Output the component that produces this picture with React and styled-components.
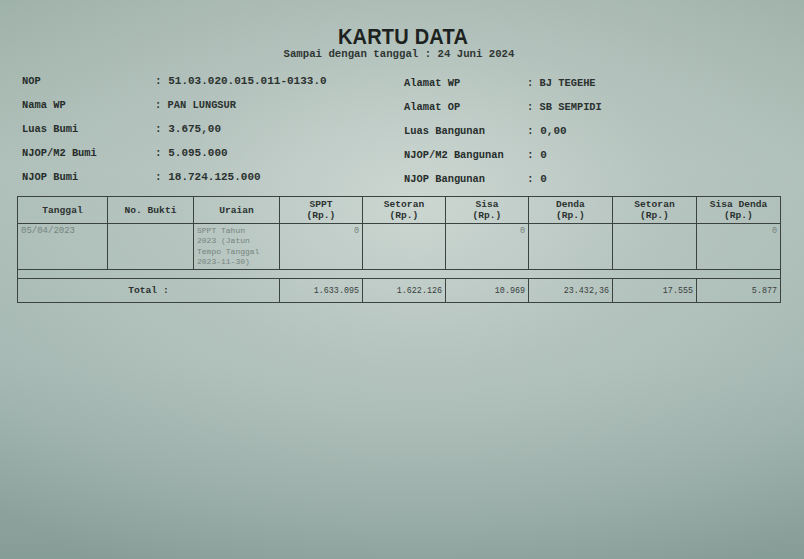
import React from "react";
import styled, { createGlobalStyle } from "styled-components";

const Global = createGlobalStyle`
  html, body { margin: 0; padding: 0; }
  body {
    width: 804px;
    height: 559px;
    overflow: hidden;
    background: #98aca5;
  }
`;

const Page = styled.div`
  width: 804px;
  height: 559px;
  box-sizing: border-box;
  padding: 24px 23px 0 17px;
  background:
    radial-gradient(ellipse 620px 420px at 52% 36%, rgba(206, 216, 211, 0.95) 0%, rgba(188, 201, 196, 0.7) 40%, rgba(160, 178, 172, 0) 100%),
    linear-gradient(180deg, #97aba1 0%, #a8bab4 30%, #9fb3ae 65%, #869c97 100%);
  font-family: "Liberation Mono", "DejaVu Sans Mono", monospace;
  color: #262d2b;
`;

const Title = styled.h1`
  margin: 0;
  text-align: center;
  font-family: "Liberation Sans", Arial, sans-serif;
  font-weight: 700;
  font-size: 20px;
  line-height: 24px;
  letter-spacing: 0.2px;
  color: #1c2220;
  transform: translateX(4px) scaleY(1.08);
`;

const Subtitle = styled.div`
  text-align: center;
  font-size: 10.7px;
  line-height: 14px;
  font-weight: 700;
  color: #2f3634;
  margin-top: -1px;
`;

const InfoGrid = styled.div`
  display: grid;
  grid-template-columns: 382px 1fr;
  margin: 8px 0 0 5px;
`;

const InfoCol = styled.div`
  display: flex;
  flex-direction: column;
  padding-top: ${(p) => p.$offset || 0}px;
`;

const InfoRow = styled.div`
  display: grid;
  grid-template-columns: ${(p) => p.$label}px 1fr;
  height: 24px;
  align-items: center;
`;

const Label = styled.span`
  font-size: 10.4px;
  font-weight: 700;
  color: #262d2b;
  white-space: nowrap;
`;

const Value = styled.span`
  font-size: ${(p) => (p.$big ? 11 : 10.4)}px;
  font-weight: 700;
  color: #2b3230;
  white-space: nowrap;
`;

const Table = styled.table`
  margin-top: 5px;
  width: 764px;
  border-collapse: collapse;
  table-layout: fixed;
  border: 1.5px solid #3a4340;
`;

const Col = styled.col`
  width: ${(p) => p.$w}px;
`;

const Th = styled.th`
  height: 26px;
  padding: 0 2px;
  border: 1px solid #3a4340;
  font-size: 9.6px;
  line-height: 11px;
  font-weight: 700;
  color: #2c3331;
  text-align: center;
  vertical-align: middle;
`;

const Td = styled.td`
  height: 37px;
  padding: 2px 3px;
  border: 1px solid #3a4340;
  font-size: ${(p) => p.$size || 8.5}px;
  line-height: 10.3px;
  color: #76847f;
  text-align: ${(p) => p.$align || "left"};
  vertical-align: top;
`;

const SpacerTd = styled.td`
  height: 8px;
  padding: 0;
  border: 1px solid #3a4340;
`;

const TotalTd = styled.td`
  height: 23px;
  padding: 0 3px;
  border: 1px solid #3a4340;
  font-size: ${(p) => (p.$label ? 9.6 : 8.4)}px;
  font-weight: ${(p) => (p.$label ? 700 : 400)};
  color: ${(p) => (p.$label ? "#2c3331" : "#38403e")};
  text-align: ${(p) => (p.$label ? "center" : "right")};
  vertical-align: middle;
`;

const left = [
  ["NOP", "51.03.020.015.011-0133.0", true],
  ["Nama WP", "PAN LUNGSUR"],
  ["Luas Bumi", "3.675,00", true],
  ["NJOP/M2 Bumi", "5.095.000", true],
  ["NJOP Bumi", "18.724.125.000", true],
];

const right = [
  ["Alamat WP", "BJ TEGEHE"],
  ["Alamat OP", "SB SEMPIDI"],
  ["Luas Bangunan", "0,00", true],
  ["NJOP/M2 Bangunan", "0", true],
  ["NJOP Bangunan", "0", true],
];

const widths = [90, 86, 86, 83, 83, 83, 84, 84, 84];

const headers = [
  ["Tanggal"],
  ["No. Bukti"],
  ["Uraian"],
  ["SPPT", "(Rp.)"],
  ["Setoran", "(Rp.)"],
  ["Sisa", "(Rp.)"],
  ["Denda", "(Rp.)"],
  ["Setoran", "(Rp.)"],
  ["Sisa Denda", "(Rp.)"],
];

const totals = ["1.633.095", "1.622.126", "10.969", "23.432,36", "17.555", "5.877"];

export default function App() {
  return (
    <>
      <Global />
      <Page>
        <Title>KARTU DATA</Title>
        <Subtitle>Sampai dengan tanggal : 24 Juni 2024</Subtitle>
        <InfoGrid>
          <InfoCol>
            {left.map(([l, v, big]) => (
              <InfoRow key={l} $label={133}>
                <Label>{l}</Label>
                <Value $big={big}>: {v}</Value>
              </InfoRow>
            ))}
          </InfoCol>
          <InfoCol $offset={2}>
            {right.map(([l, v, big]) => (
              <InfoRow key={l} $label={123}>
                <Label>{l}</Label>
                <Value $big={big}>: {v}</Value>
              </InfoRow>
            ))}
          </InfoCol>
        </InfoGrid>
        <Table>
          <colgroup>
            {widths.map((w, i) => (
              <Col key={i} $w={w} />
            ))}
          </colgroup>
          <thead>
            <tr>
              {headers.map((h, i) => (
                <Th key={i}>
                  {h[0]}
                  {h[1] && <br />}
                  {h[1]}
                </Th>
              ))}
            </tr>
          </thead>
          <tbody>
            <tr>
              <Td $size={9}>05/04/2023</Td>
              <Td />
              <Td $size={8}>
                SPPT Tahun
                <br />
                2023 (Jatun
                <br />
                Tempo Tanggal
                <br />
                2023-11-30)
              </Td>
              <Td $align="right">0</Td>
              <Td />
              <Td $align="right">0</Td>
              <Td />
              <Td />
              <Td $align="right">0</Td>
            </tr>
            <tr>
              <SpacerTd colSpan={9} />
            </tr>
            <tr>
              <TotalTd $label colSpan={3}>
                Total :
              </TotalTd>
              {totals.map((t, i) => (
                <TotalTd key={i}>{t}</TotalTd>
              ))}
            </tr>
          </tbody>
        </Table>
      </Page>
    </>
  );
}
